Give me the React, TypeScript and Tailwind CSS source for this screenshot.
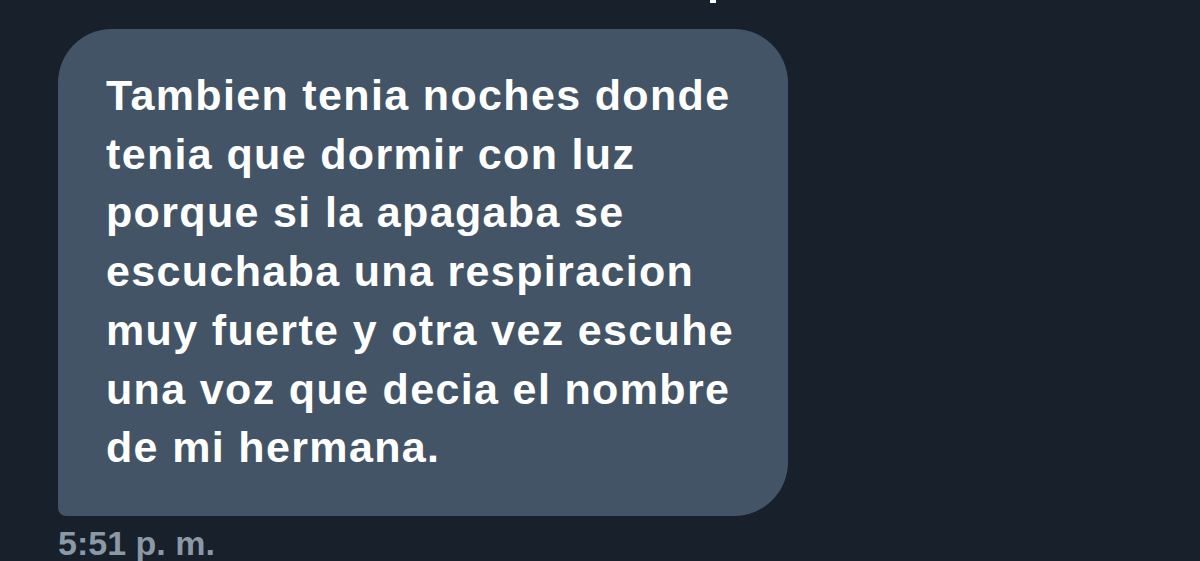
export default function App() {
  return (
    <div className="relative w-[1200px] h-[561px] overflow-hidden bg-[#18202b] font-['Liberation_Sans',Arial,sans-serif]">
      <div className="absolute left-[710px] top-0 w-[6px] h-[3px] bg-white" />
      <div className="pt-[29px] pl-[58px]">
        <div className="w-[730px] h-[487px] bg-[#435466] rounded-[54px] rounded-bl-[8px] pl-[48px] pt-[37px] box-border">
          <p className="text-white font-bold text-[43px] leading-[58.7px] tracking-[1.35px] whitespace-nowrap">
            Tambien tenia noches donde<br />
            tenia que dormir con luz<br />
            porque si la apagaba se<br />
            escuchaba una respiracion<br />
            muy fuerte y otra vez escuhe<br />
            una voz que decia el nombre<br />
            de mi hermana.
          </p>
        </div>
        <div className="mt-[10px] text-[#8b98a5] font-bold text-[34px] leading-[34px] whitespace-nowrap">5:51 p. m.</div>
      </div>
    </div>
  );
}
